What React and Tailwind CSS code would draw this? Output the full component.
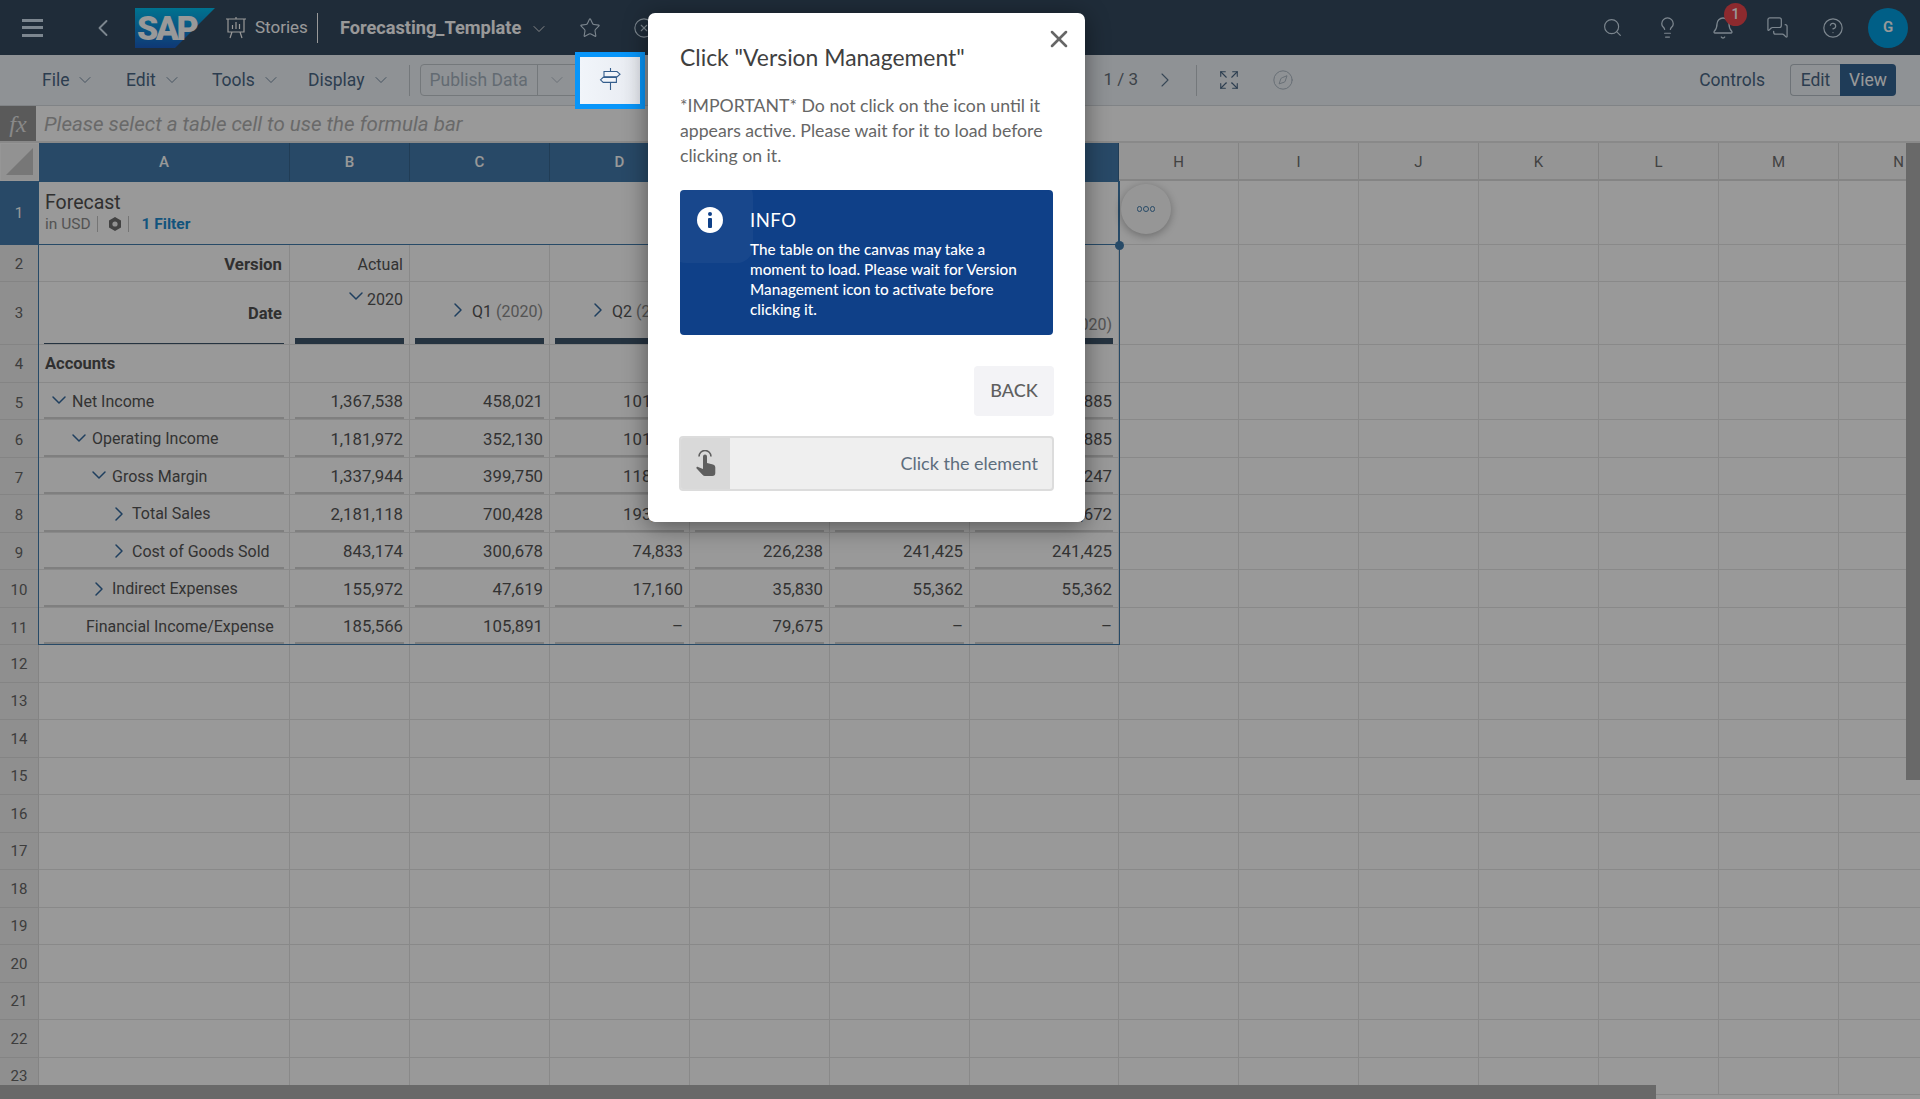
import React from "react";
import { Search, Lightbulb, Bell, MessagesSquare, CircleHelp, Star, CircleX, ChevronDown, ChevronRight, ChevronLeft, Expand, Compass, X } from "lucide-react";

const UI = "font-['Roboto',sans-serif]";
const colW = ["w-[251px]", "w-[120px]", "w-[140px]", "w-[140px]", "w-[140px]", "w-[140px]", "w-[149px]"];
const extraW = ["w-[120px]", "w-[120px]", "w-[120px]", "w-[120px]", "w-[120px]", "w-[120px]", "w-[120px]"];

function MenuItem({ label, className }) {
  return (
    <div className={"flex items-center gap-[6px] text-[17.5px] text-[#4a6785] " + className}>
      <span>{label}</span>
      <ChevronDown size={20} strokeWidth={1} className="text-[#5b7690]" />
    </div>
  );
}

function RowHead({ n, active, pad }) {
  return (
    <div className={"shrink-0 w-[39px] h-full flex items-center justify-center text-[15px] border-b border-r " + (pad || "") + " " + (active ? "bg-[#447bac] text-white border-[#447bac]" : "bg-[#eeeeee] text-[#666666] border-[#dcdcdc]")}>
      {n}
    </div>
  );
}

function ExtraCells() {
  return extraW.map((w, i) => <div key={i} className={"shrink-0 h-full border-r border-b border-[#e4e4e4] " + w} />);
}

function Tree({ level, open, label }) {
  const pads = ["pl-[6px]", "pl-[26px]", "pl-[46px]", "pl-[66px]"];
  return (
    <div className={"flex items-center text-[16px] text-[#555555] " + pads[level]}>
      {open ? (
        <ChevronDown size={24} strokeWidth={1.5} className="text-[#346a9f] -ml-[3px] mr-[1px] -my-[4px] -mt-[7px]" />
      ) : (
        <ChevronRight size={24} strokeWidth={1.5} className="text-[#346a9f] -ml-[3px] mr-[1px] -my-[4px] -mt-[5px]" />
      )}
      <span>{label}</span>
    </div>
  );
}

const dataRows = [
  { n: 5, t: { level: 0, open: true, label: "Net Income" }, v: ["1,367,538", "458,021", "101,204", "", "", "241,885"] },
  { n: 6, t: { level: 1, open: true, label: "Operating Income" }, v: ["1,181,972", "352,130", "101,204", "", "", "241,885"] },
  { n: 7, t: { level: 2, open: true, label: "Gross Margin" }, v: ["1,337,944", "399,750", "118,364", "", "", "297,247"] },
  { n: 8, t: { level: 3, label: "Total Sales" }, v: ["2,181,118", "700,428", "193,197", "", "", "538,672"] },
  { n: 9, t: { level: 3, label: "Cost of Goods Sold" }, v: ["843,174", "300,678", "74,833", "226,238", "241,425", "241,425"] },
  { n: 10, t: { level: 2, label: "Indirect Expenses" }, v: ["155,972", "47,619", "17,160", "35,830", "55,362", "55,362"] },
  { n: 11, t: { level: 1, label: "Financial Income/Expense", extra: true }, v: ["185,566", "105,891", "–", "79,675", "–", "–"] },
];

function DataRow({ r }) {
  return (
    <div className="flex h-[37.5px]">
      <RowHead n={r.n} pad="pt-[4px]" />
      <div className={"shrink-0 h-full border-r border-b border-[#e4e4e4] px-[5px] " + colW[0]}>
        <div className="h-full border-b-2 border-[#d4d4d4] flex items-center pt-[4px]">
          {r.t.extra ? (
            <div className="pl-[42px] text-[16px] text-[#555555]">{r.t.label}</div>
          ) : (
            <Tree {...r.t} />
          )}
        </div>
      </div>
      {r.v.map((v, i) => (
        <div key={i} className={"shrink-0 h-full border-r border-b border-[#e4e4e4] pl-[5px] pr-[5px] " + colW[i + 1]}>
          <div className="h-full border-b-2 border-[#d4d4d4] flex items-center justify-end pt-[4px] pr-[1px] text-[16.8px] text-[#555555]">{v}</div>
        </div>
      ))}
      <ExtraCells />
    </div>
  );
}

function EmptyRow({ n }) {
  return (
    <div className="flex h-[37.5px]">
      <RowHead n={n} pad="pt-[1px]" />
      {colW.map((w, i) => (
        <div key={i} className={"shrink-0 h-full border-r border-b border-[#e4e4e4] " + w} />
      ))}
      <ExtraCells />
    </div>
  );
}

function StoriesIcon() {
  return (
    <svg width="22" height="24" viewBox="0 0 22 24" fill="none" stroke="#ffffff" strokeWidth="1.2">
      <path d="M1 3h20M3 3v13h16V3M7 16l-2 6M15 16l2 6M11 1v2" />
      <path d="M7.5 13V9M11 13V6M14.5 13V8" />
    </svg>
  );
}

function SignIcon() {
  return (
    <svg width="22" height="24" viewBox="0 0 22 24" fill="none" stroke="#345d8c" strokeWidth="1.1">
      <path d="M11.5 1v22" />
      <path d="M5 4.5h13l3 2.7-3 2.7H5z" fill="#f1f4f9" />
      <path d="M1.5 12.8l2.7-2.4h13.2v5H4.2z" fill="#f1f4f9" />
    </svg>
  );
}

function HandIcon() {
  return (
    <svg width="20" height="27" viewBox="0 0 20 27" fill="#5f5f5f">
      <path d="M3 6.5a6 6 0 0 1 12 0" fill="none" stroke="#5f5f5f" strokeWidth="1.6" />
      <path d="M7 6.5a2 2 0 0 1 4 0V13l6 1.5c1.4.4 2.3 1.5 2.3 3V23a3 3 0 0 1-3 3H9c-1 0-1.8-.4-2.5-1.2L.6 18.4c-.7-.9.4-2.1 1.4-1.5L7 19z" />
    </svg>
  );
}

export default function App() {
  return (
    <div className={"relative h-[1099px] w-[1920px] overflow-hidden bg-white flex flex-col " + UI}>
      {/* shell */}
      <header className="h-[55px] shrink-0 bg-[#354a5f] flex items-center text-white">
        <div className="ml-[22px] w-[21px] flex flex-col gap-[4.5px]">
          <div className="h-[3px] bg-[#cfe0ee]" />
          <div className="h-[3px] bg-[#cfe0ee]" />
          <div className="h-[3px] bg-[#cfe0ee]" />
        </div>
        <ChevronLeft size={28} strokeWidth={1.6} className="ml-[46px] text-[#cfe0ee]" />
        <div className="ml-[18px] relative w-[80px] h-[40px] mt-[1px]">
          <svg width="80" height="40" viewBox="0 0 80 40" className="absolute inset-0">
            <defs>
              <linearGradient id="sapg" x1="0" y1="0" x2="0" y2="1">
                <stop offset="0" stopColor="#00bff0" />
                <stop offset="1" stopColor="#1a5ec4" />
              </linearGradient>
            </defs>
            <polygon points="0,0 80,0 40,40 0,40" fill="url(#sapg)" />
          </svg>
          <span className="absolute left-[2px] top-[1px] font-['Roboto',sans-serif] font-black text-[34px] leading-[38px] tracking-[-2.5px] text-white">SAP</span>
        </div>
        <div className="ml-[10px]"><StoriesIcon /></div>
        <span className="ml-[8px] text-[17px]">Stories</span>
        <div className="ml-[9px] w-px h-[30px] bg-white" />
        <span className="ml-[22px] text-[18.2px] font-bold">Forecasting_Template</span>
        <ChevronDown size={20} strokeWidth={1} className="ml-[8px] mt-[2px]" />
        <Star size={22} strokeWidth={1.2} className="ml-[30px] text-[#cfe0ee]" />
        <CircleX size={22} strokeWidth={1.2} className="ml-[32px] text-[#cfe0ee]" />
        <div className="ml-auto flex items-center text-[#cfe0ee]">
          <Search size={21} strokeWidth={1.3} />
          <Lightbulb size={23} strokeWidth={1.3} className="ml-[33px]" />
          <div className="ml-[32px] relative">
            <Bell size={24} strokeWidth={1.3} />
            <div className="absolute -top-[13px] left-[13px] w-[23px] h-[23px] rounded-full bg-[#eb464d] text-white text-[14px] font-medium flex items-center justify-center">1</div>
          </div>
          <MessagesSquare size={23} strokeWidth={1.3} className="ml-[31px]" />
          <CircleHelp size={22} strokeWidth={1.3} className="ml-[33px]" />
          <div className="ml-[24px] mr-[12px] w-[40px] h-[40px] rounded-full bg-[#009fe1] text-white text-[15px] font-semibold flex items-center justify-center">G</div>
        </div>
      </header>

      {/* toolbar */}
      <div className="h-[51px] shrink-0 bg-[#eff4f8] border-b border-[#d6dbe0] flex items-center">
        <MenuItem label="File" className="ml-[42px] w-[84px]" />
        <MenuItem label="Edit" className="w-[86px]" />
        <MenuItem label="Tools" className="w-[96px]" />
        <MenuItem label="Display" />
        <div className="ml-[18px] w-px h-[31px] bg-[#c2c8ce]" />
        <div className="ml-[10px] h-[32px] w-[170px] rounded-[4px] border border-[#c2c8ce] flex items-center text-[17.5px] text-[#a6b2bf]">
          <span className="pl-[9px] w-[116px]">Publish Data</span>
          <div className="w-px h-full bg-[#c2c8ce]" />
          <ChevronDown size={20} strokeWidth={1} className="ml-[9px] text-[#a6b2bf]" />
        </div>
        <div className="ml-[514px] text-[17px] text-[#666f78] w-[36px]">1 / 3</div>
        <ChevronRight size={24} strokeWidth={1.1} className="ml-[13px] text-[#5b7690]" />
        <div className="ml-[19px] w-px h-[31px] bg-[#c2c8ce]" />
        <Expand size={22} strokeWidth={1.2} className="ml-[21px] text-[#4a6785] -mt-[1px]" />
        <Compass size={22} strokeWidth={1} className="ml-[32px] text-[#a6b2bf] -mt-[1px]" />
        <span className="ml-auto text-[17.5px] text-[#4a6785]">Controls</span>
        <div className="ml-[25px] mr-[24px] flex h-[32px] text-[17.5px]">
          <div className="w-[50px] flex items-center justify-center rounded-l-[4px] border border-[#b6bec6] border-r-0 text-[#4a6785]">Edit</div>
          <div className="w-[56px] flex items-center justify-center rounded-r-[4px] bg-[#346493] text-white">View</div>
        </div>
      </div>

      {/* formula bar */}
      <div className="h-[37px] shrink-0 bg-white border-b-2 border-[#e4e4e4] flex items-stretch">
        <div className="w-[36px] bg-[#969696] flex items-center justify-center font-['Liberation_Serif',serif] italic text-[24px] text-[#e4e4e4]">fx</div>
        <div className="ml-[8px] flex items-center pt-[1px] italic text-[20.5px] text-[#b0b0b0]">Please select a table cell to use the formula bar</div>
      </div>

      {/* column headers */}
      <div className="h-[38px] shrink-0 flex">
        <div className="w-[39px] bg-[#f4f4f4] border border-[#fafafa] flex items-end justify-end p-[5px]">
          <div className="w-[28px] h-[27px] bg-[#c6c6c6] [clip-path:polygon(100%_0,100%_100%,0_100%)]" />
        </div>
        {["A", "B", "C", "D", "E", "F", "G"].map((c, i) => (
          <div key={c} className={"shrink-0 flex items-center justify-center pt-[1px] bg-[#447bac] border-r border-[#37678f] text-white font-medium text-[15px] " + colW[i]}>{c}</div>
        ))}
        {["H", "I", "J", "K", "L", "M", "N"].map((c, i) => (
          <div key={c} className={"shrink-0 flex items-center justify-center pt-[2px] bg-[#f8f8f8] border-r border-b-2 border-[#dcdcdc] text-[#6e6e6e] text-[15px] " + extraW[i]}>{c}</div>
        ))}
      </div>

      {/* grid */}
      <div className="relative flex-1 overflow-hidden">
        {/* row 1 */}
        <div className="flex h-[64px]">
          <RowHead n={1} active pad="pt-[1px]" />
          <div className="shrink-0 w-[1080px] h-full border-r border-b border-[#427cac] pl-[6px] pt-[10px]">
            <div className="text-[19.5px] leading-[24px] text-[#505050]">Forecast</div>
            <div className="flex items-center text-[15.5px] leading-[20px] -mt-[1px]">
              <span className="text-[#8c8c8c]">in USD</span>
              <div className="ml-[6px] w-px h-[16px] bg-[#c4c4c4]" />
              <svg width="16" height="16" viewBox="0 0 16 16" className="ml-[9px]" fill="#6e6e6e">
                <path d="M8 1l6 3.4v7.2L8 15l-6-3.4V4.4z" />
                <circle cx="8" cy="8" r="2.6" fill="#f2f2f2" />
              </svg>
              <div className="ml-[5px] w-px h-[16px] bg-[#c4c4c4]" />
              <span className="ml-[13px] font-bold text-[#1f8dd0]">1 Filter</span>
            </div>
          </div>
          <ExtraCells />
        </div>

        {/* row 2 */}
        <div className="flex h-[37px]">
          <RowHead n={2} pad="pt-[2px]" />
          <div className={"shrink-0 h-full border-r border-b border-[#e4e4e4] flex items-center justify-end pt-[4px] pr-[7px] font-bold text-[16.8px] text-[#505050] " + colW[0]}>Version</div>
          <div className={"shrink-0 h-full border-r border-b border-[#e4e4e4] flex items-center justify-end pt-[4px] pr-[6px] text-[16px] text-[#555555] " + colW[1]}>Actual</div>
          {colW.slice(2).map((w, i) => (
            <div key={i} className={"shrink-0 h-full border-r border-b border-[#e4e4e4] " + w} />
          ))}
          <ExtraCells />
        </div>

        {/* row 3 */}
        <div className="flex h-[63px]">
          <RowHead n={3} />
          <div className={"shrink-0 h-full border-r border-b border-[#e4e4e4] px-[5px] " + colW[0]}>
            <div className="h-full border-b border-[#3f566c] flex justify-end pt-[20px] pr-[2px] font-bold text-[16.5px] text-[#505050]">Date</div>
          </div>
          <div className={"shrink-0 h-full border-r border-b border-[#e4e4e4] px-[5px] " + colW[1]}>
            <div className="h-full border-b-[6px] border-[#3f566c] flex justify-end items-start pt-[6px] pr-[1px] text-[16px] text-[#555555]">
              <ChevronDown size={24} strokeWidth={1.5} className="text-[#346a9f] -mr-[1px] -mt-[4px]" />
              <span>2020</span>
            </div>
          </div>
          <div className={"shrink-0 h-full border-r border-b border-[#e4e4e4] px-[5px] " + colW[2]}>
            <div className="h-full border-b-[6px] border-[#3f566c] flex justify-end items-start pt-[18px] pr-[1px] text-[16px] text-[#555555]">
              <ChevronRight size={24} strokeWidth={1.5} className="text-[#346a9f] mr-[2px] -mt-[2px]" />
              <span>Q1 <span className="text-[#8c8c8c]">(2020)</span></span>
            </div>
          </div>
          <div className={"shrink-0 h-full border-r border-b border-[#e4e4e4] px-[5px] " + colW[3]}>
            <div className="h-full border-b-[6px] border-[#3f566c] flex justify-end items-start pt-[18px] pr-[1px] text-[16px] text-[#555555]">
              <ChevronRight size={24} strokeWidth={1.5} className="text-[#346a9f] mr-[2px] -mt-[2px]" />
              <span>Q2 <span className="text-[#8c8c8c]">(2020)</span></span>
            </div>
          </div>
          <div className={"shrink-0 h-full border-r border-b border-[#e4e4e4] px-[5px] " + colW[4]}>
            <div className="h-full border-b-[6px] border-[#3f566c]" />
          </div>
          <div className={"shrink-0 h-full border-r border-b border-[#e4e4e4] px-[5px] " + colW[5]}>
            <div className="h-full border-b-[6px] border-[#3f566c]" />
          </div>
          <div className={"shrink-0 h-full border-r border-b border-[#e4e4e4] px-[5px] " + colW[6]}>
            <div className="h-full border-b-[6px] border-[#3f566c] flex justify-end items-start pt-[31px] pr-[1px] text-[16px] text-[#8c8c8c]">(2020)</div>
          </div>
          <ExtraCells />
        </div>

        {/* row 4 */}
        <div className="flex h-[37.5px]">
          <RowHead n={4} pad="pt-[2px]" />
          <div className={"shrink-0 h-full border-r border-b border-[#e4e4e4] flex items-center pt-[2px] pl-[6px] font-bold text-[16.5px] text-[#505050] " + colW[0]}>Accounts</div>
          {colW.slice(1).map((w, i) => (
            <div key={i} className={"shrink-0 h-full border-r border-b border-[#e4e4e4] " + w} />
          ))}
          <ExtraCells />
        </div>

        {dataRows.map((r) => (
          <DataRow key={r.n} r={r} />
        ))}
        {[12, 13, 14, 15, 16, 17, 18, 19, 20, 21, 22, 23].map((n) => (
          <EmptyRow key={n} n={n} />
        ))}

        {/* table selection frame */}
        <div className="absolute left-[38px] top-0 w-[1082px] h-[464px] border border-[#427cac] pointer-events-none" />
        <div className="absolute left-[1115px] top-[60px] w-[9px] h-[9px] rounded-full bg-[#427cac]" />
        {/* floating more button */}
        <div className="absolute left-[1121px] top-[3px] w-[50px] h-[50px] rounded-full bg-[#fbfbfb] shadow-[0_2px_8px_rgba(0,0,0,0.3)] flex items-center justify-center gap-[1px]">
          <div className="w-[5.5px] h-[5.5px] rounded-full border border-[#427cac]" />
          <div className="w-[5.5px] h-[5.5px] rounded-full border border-[#427cac]" />
          <div className="w-[5.5px] h-[5.5px] rounded-full border border-[#427cac]" />
        </div>
      </div>

      {/* scrollbars */}
      <div className="absolute right-0 top-[143px] w-[14px] h-[637px] bg-[#afafaf]" />
      <div className="absolute left-0 bottom-0 w-[1656px] h-[14px] bg-[#afafaf]" />

      {/* dim overlay */}
      <div className="absolute inset-0 bg-black/40" />

      {/* highlighted element */}
      <div className="absolute left-[575px] top-[52px] w-[70px] h-[57px] border-[5px] border-[#0896fa] bg-gradient-to-r from-[#f1f5fa] to-[#e8ebf1] flex items-center justify-center pb-[3px]">
        <SignIcon />
      </div>

      {/* tour dialog */}
      <div className="absolute left-[648px] top-[13px] w-[437px] h-[509px] bg-white rounded-[7px] shadow-[0_4px_24px_rgba(0,0,0,0.45)] px-[32px] pt-[28px] font-['Lato',sans-serif]">
        <X size={28} strokeWidth={2.2} className="absolute right-[12px] top-[12px] text-[#666666]" />
        <div className="text-[22.9px] leading-[32px] text-[#404040]">Click "Version Management"</div>
        <p className="mt-[20px] text-[17.7px] leading-[25px] text-[#666666]">*IMPORTANT* Do not click on the icon until it appears active. Please wait for it to load before clicking on it.</p>
        <div className="relative mt-[22px] h-[145px] w-[373px] rounded-[4px] bg-[#0f4088] overflow-hidden flex">
          <div className="absolute -left-[10px] -top-[10px] w-[83px] h-[83px] rounded-[16px] bg-white/[0.04]" />
          <div className="relative ml-[17px] mt-[17px] w-[26px] h-[26px] rounded-full bg-white flex flex-col items-center justify-center gap-[2px]">
            <div className="w-[4px] h-[4px] rounded-full bg-[#0f4088]" />
            <div className="w-[4px] h-[10px] rounded-[1px] bg-[#0f4088]" />
          </div>
          <div className="relative ml-[27px] pt-[18px] w-[275px] text-white">
            <div className="text-[18.5px] leading-[24px] tracking-[0.5px]">INFO</div>
            <div className="mt-[7px] text-[15.3px] leading-[20px] font-medium">The table on the canvas may take a moment to load. Please wait for Version Management icon to activate before clicking it.</div>
          </div>
        </div>
        <div className="mt-[31px] flex justify-end -mr-[1px]">
          <div className="w-[80px] h-[50px] pb-[1px] rounded-[4px] bg-[#f3f3f6] flex items-center justify-center text-[18px] font-medium text-[#5f5f5f]">BACK</div>
        </div>
        <div className="mt-[20px] -mx-[1px] h-[55px] rounded-[4px] border-2 border-[#dcdcdc] bg-[#efefef] flex overflow-hidden">
          <div className="w-[49px] bg-[#d9d9d9] flex items-center justify-center"><HandIcon /></div>
          <div className="flex-1 flex items-center justify-end pr-[14px] text-[18px] text-[#5d6d7d]">Click the element</div>
        </div>
      </div>
    </div>
  );
}
